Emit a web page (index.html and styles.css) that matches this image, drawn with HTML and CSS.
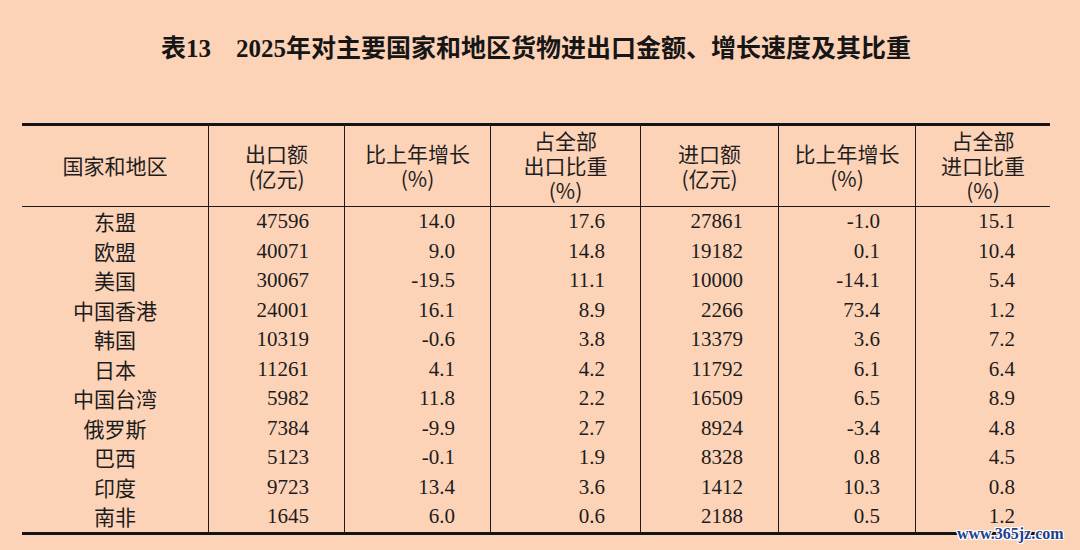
FILE: index.html
```html
<!DOCTYPE html>
<html lang="zh-CN">
<head>
<meta charset="utf-8">
<title>表13 2025年对主要国家和地区货物进出口金额、增长速度及其比重</title>
<link rel="stylesheet" href="styles.css">
</head>
<body>
<div class="page">
  <div class="title">表13　2025年对主要国家和地区货物进出口金额、增长速度及其比重</div>
  <table class="stats">
    <colgroup>
      <col class="c1"><col class="c2"><col class="c3"><col class="c4"><col class="c5"><col class="c6"><col class="c7">
    </colgroup>
    <thead>
      <tr>
        <th>国家和地区</th>
        <th>出口额<br>(亿元)</th>
        <th>比上年增长<br>(%)</th>
        <th>占全部<br>出口比重<br>(%)</th>
        <th>进口额<br>(亿元)</th>
        <th>比上年增长<br>(%)</th>
        <th>占全部<br>进口比重<br>(%)</th>
      </tr>
    </thead>
    <tbody>
      <tr><td>东盟</td><td>47596</td><td>14.0</td><td>17.6</td><td>27861</td><td>-1.0</td><td>15.1</td></tr>
      <tr><td>欧盟</td><td>40071</td><td>9.0</td><td>14.8</td><td>19182</td><td>0.1</td><td>10.4</td></tr>
      <tr><td>美国</td><td>30067</td><td>-19.5</td><td>11.1</td><td>10000</td><td>-14.1</td><td>5.4</td></tr>
      <tr><td>中国香港</td><td>24001</td><td>16.1</td><td>8.9</td><td>2266</td><td>73.4</td><td>1.2</td></tr>
      <tr><td>韩国</td><td>10319</td><td>-0.6</td><td>3.8</td><td>13379</td><td>3.6</td><td>7.2</td></tr>
      <tr><td>日本</td><td>11261</td><td>4.1</td><td>4.2</td><td>11792</td><td>6.1</td><td>6.4</td></tr>
      <tr><td>中国台湾</td><td>5982</td><td>11.8</td><td>2.2</td><td>16509</td><td>6.5</td><td>8.9</td></tr>
      <tr><td>俄罗斯</td><td>7384</td><td>-9.9</td><td>2.7</td><td>8924</td><td>-3.4</td><td>4.8</td></tr>
      <tr><td>巴西</td><td>5123</td><td>-0.1</td><td>1.9</td><td>8328</td><td>0.8</td><td>4.5</td></tr>
      <tr><td>印度</td><td>9723</td><td>13.4</td><td>3.6</td><td>1412</td><td>10.3</td><td>0.8</td></tr>
      <tr><td>南非</td><td>1645</td><td>6.0</td><td>0.6</td><td>2188</td><td>0.5</td><td>1.2</td></tr>
    </tbody>
  </table>
  <div class="watermark">www.365jz.com</div>
</div>
</body>
</html>
```

FILE: styles.css
```css
html, body {
  margin: 0;
  padding: 0;
  background: #fdd3b8;
}

body {
  width: 1080px;
  height: 550px;
  overflow: hidden;
  color: #1c1c1c;
  font-family: "Liberation Serif", "Noto Sans CJK SC", serif;
}

.page {
  position: relative;
  width: 1028px;
  height: 550px;
  padding-left: 22px;
}

.title {
  padding-top: 32px;
  height: 34px;
  line-height: 34px;
  margin-bottom: 57px;
  text-align: center;
  font-family: "Liberation Serif", "Noto Sans CJK SC", serif;
  font-weight: 700;
  font-size: 25px;
  color: #161616;
}

.stats {
  width: 1028px;
  table-layout: fixed;
  border-collapse: separate;
  border-spacing: 0;
}

.c1 { width: 186px; }
.c2 { width: 136px; }
.c3 { width: 146px; }
.c4 { width: 150px; }
.c5 { width: 138px; }
.c6 { width: 137px; }
.c7 { width: 135px; }

.stats th {
  border-top: 3px solid #141414;
  border-bottom: 1px solid #1a1a1a;
  padding: 2px 0 3px;
  font-family: "Noto Sans CJK SC", sans-serif;
  font-weight: 400;
  font-size: 21px;
  line-height: 25px;
  text-align: center;
  vertical-align: middle;
  color: #1e1e1e;
}

.stats th + th,
.stats td + td {
  border-left: 1px solid #1a1a1a;
}

.stats td {
  padding: 0 35px 0 0;
  font-size: 21px;
  line-height: 29.5px;
  text-align: right;
  white-space: nowrap;
  vertical-align: middle;
}

.stats td:first-child {
  padding: 0;
  text-align: center;
  font-family: "Noto Sans CJK SC", sans-serif;
}

.stats tbody tr:last-child td {
  border-bottom: 3px solid #141414;
}

.watermark {
  position: absolute;
  left: 957px;
  top: 524px;
  font-family: "Liberation Serif", serif;
  font-weight: 700;
  font-size: 16px;
  line-height: 20px;
  color: #1f3f8c;
  text-shadow: 1px 0 0 #fff, -1px 0 0 #fff, 0 1px 0 #fff, 0 -1px 0 #fff,
               1px 1px 0 #fff, -1px -1px 0 #fff, 1px -1px 0 #fff, -1px 1px 0 #fff;
}
```
